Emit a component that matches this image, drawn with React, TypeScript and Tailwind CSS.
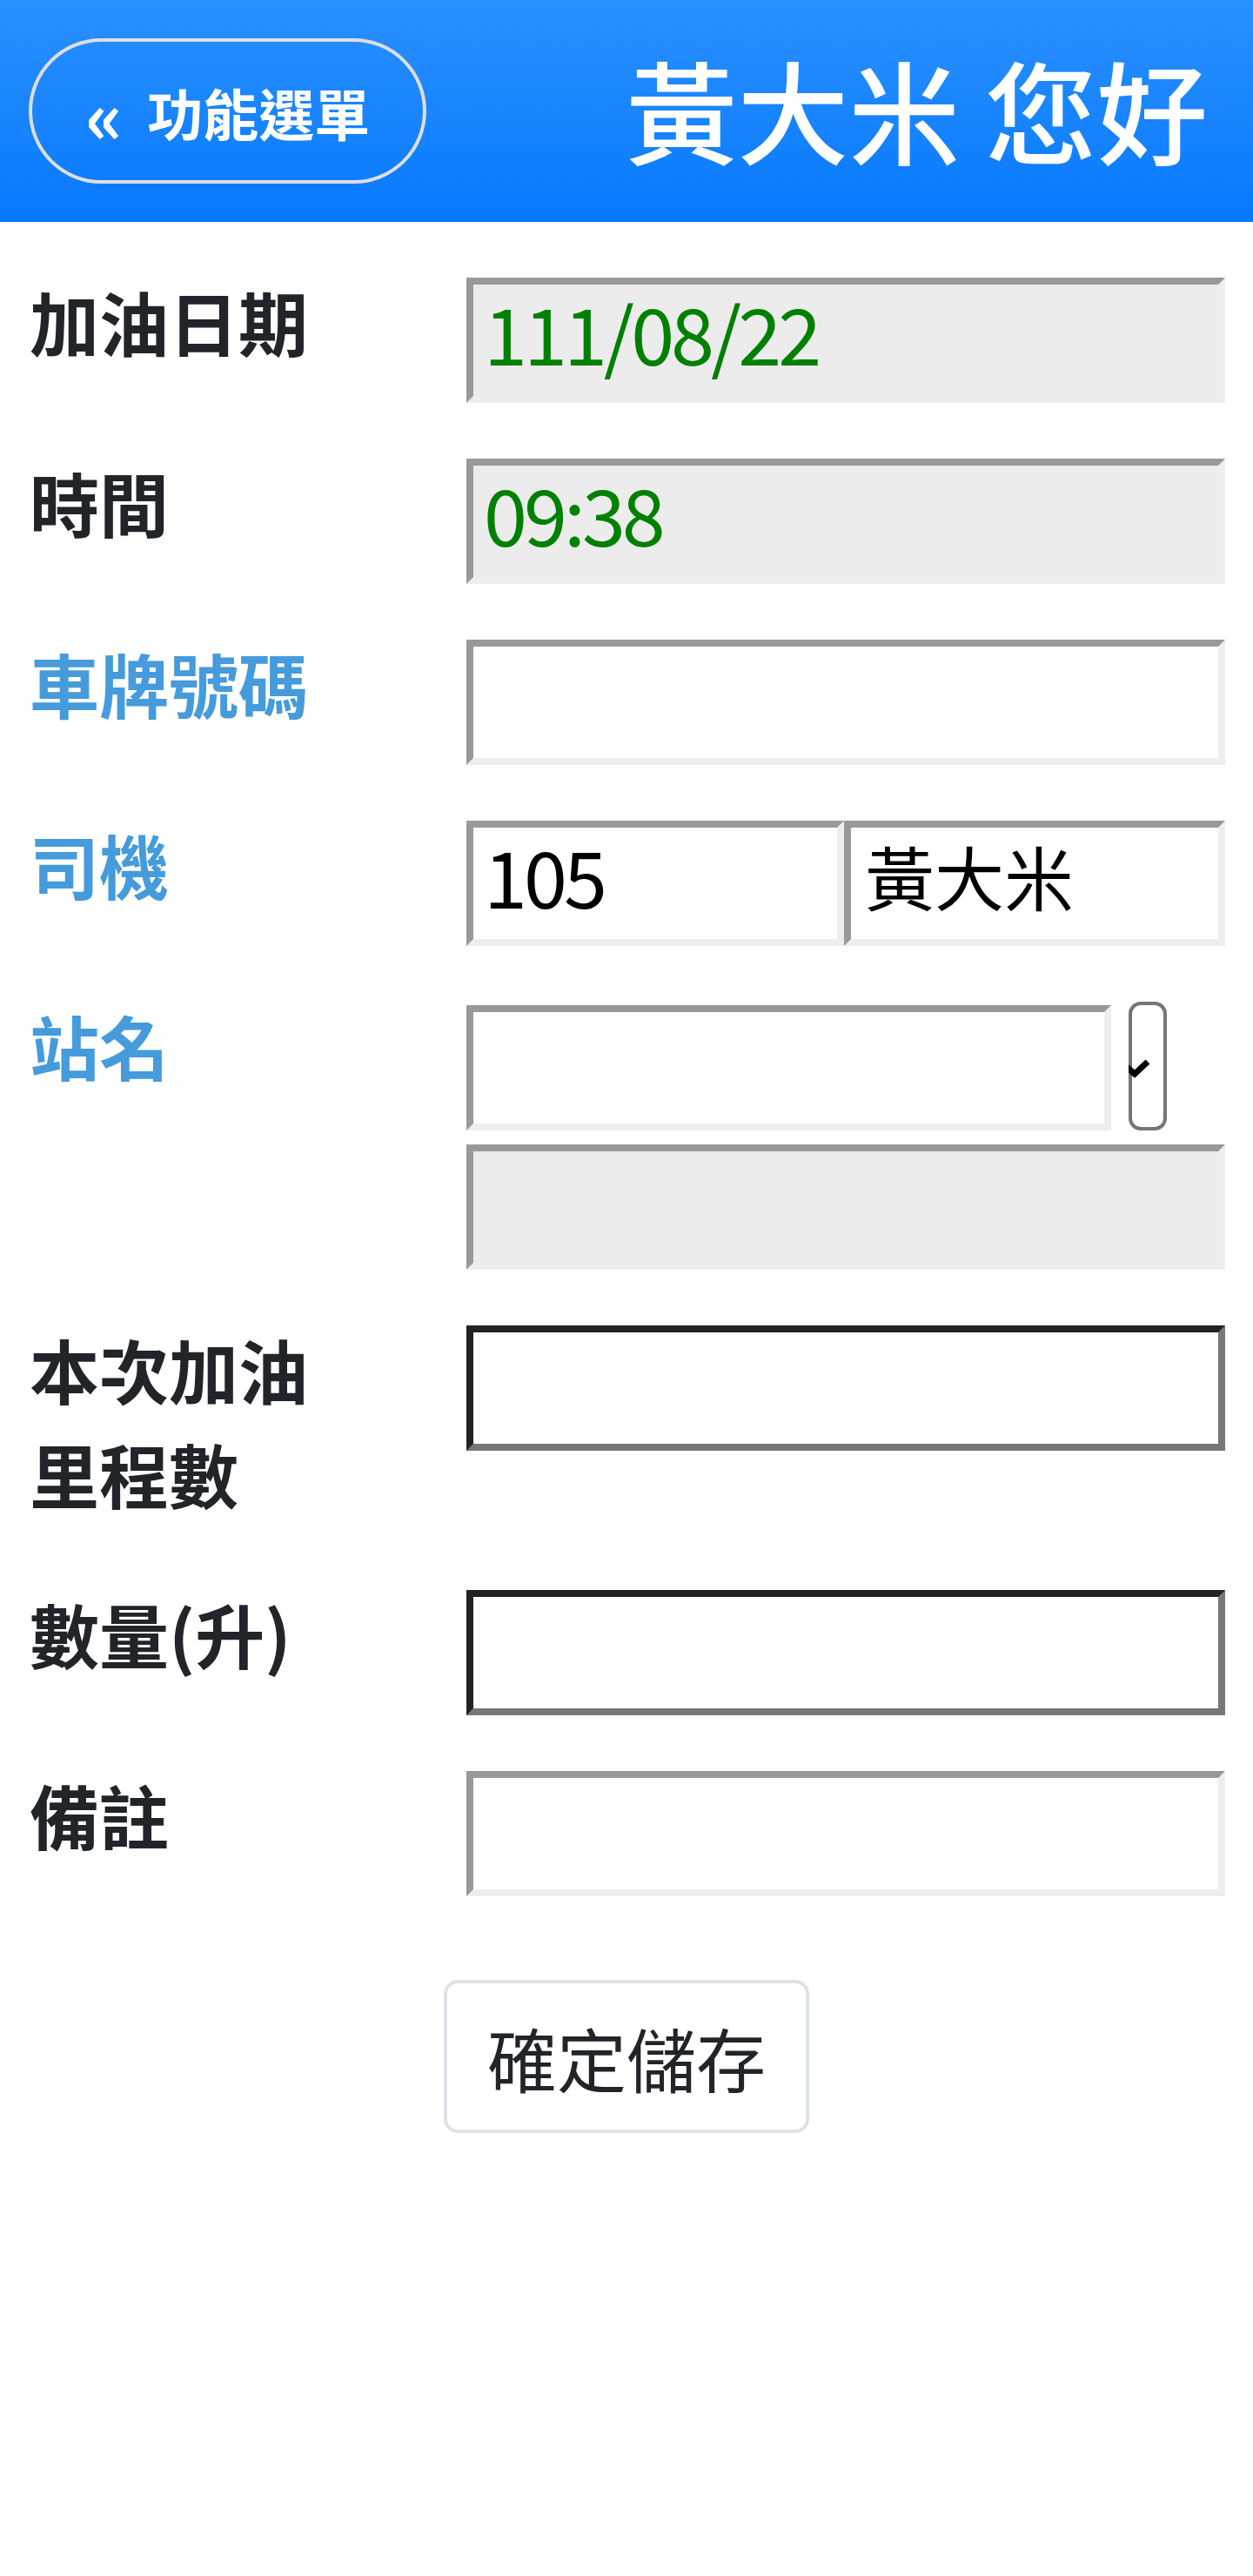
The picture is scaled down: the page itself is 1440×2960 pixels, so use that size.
import type { ReactNode } from "react";

const insetGray =
  "h-[144px] border-8 border-t-[#999] border-l-[#999] border-r-[#eee] border-b-[#eee] px-[12px] pb-[20px] outline-none";
const insetDark =
  "h-[144px] border-8 border-t-[#222] border-l-[#222] border-r-[#777] border-b-[#777] px-[12px] pb-[20px] outline-none";
const digits = "text-[90px] tracking-[-4px]";

function Row({
  label,
  blue,
  children,
}: {
  label: ReactNode;
  blue?: boolean;
  children: ReactNode;
}) {
  return (
    <div className="mb-16 flex items-start">
      <div
        className={`relative top-[-11px] w-[536px] shrink-0 pl-[34px] text-[80px] leading-[120px] font-bold ${
          blue ? "text-[#459bdb]" : "text-[#212529]"
        }`}
      >
        {label}
      </div>
      <div className="min-w-0 flex-1 pr-[32px]">{children}</div>
    </div>
  );
}

export default function App() {
  return (
    <div className="min-h-[2960px] bg-white font-['Noto_Sans_CJK_TC','Noto_Sans_CJK_SC',sans-serif]">
      <header className="flex h-[255px] items-center justify-between bg-linear-to-b from-[#2990ff] to-[#0479fe] pl-[33px] pr-[52px]">
        <button className="flex h-[167px] w-[457px] items-center justify-center rounded-full border-4 border-[#dedede] text-[64px] leading-none font-bold text-white">
          <span className="relative top-[2px] text-[82px]">«</span>
          <span className="ml-[28px]">功能選單</span>
        </button>
        <h1 className="relative top-[-3px] text-[128px] leading-none font-medium text-white">
          黃大米 您好
        </h1>
      </header>

      <main className="pt-16">
        <Row label="加油日期">
          <input
            readOnly
            defaultValue="111/08/22"
            className={`${insetGray} ${digits} w-full bg-[#ececec] text-[#008000]`}
          />
        </Row>
        <Row label="時間">
          <input
            readOnly
            defaultValue="09:38"
            className={`${insetGray} ${digits} w-full bg-[#ececec] text-[#008000]`}
          />
        </Row>
        <Row label="車牌號碼" blue>
          <input className={`${insetGray} ${digits} w-full bg-white`} />
        </Row>
        <Row label="司機" blue>
          <div className="flex">
            <input
              defaultValue="105"
              className={`${insetGray} ${digits} w-0 flex-1 bg-white text-black`}
            />
            <input
              defaultValue="黃大米"
              className={`${insetGray} w-0 flex-1 bg-white pl-[16px] text-[80px] text-black`}
            />
          </div>
        </Row>
        <Row label="站名" blue>
          <div className="flex flex-col gap-4">
            <div className="flex items-end">
              <input className={`${insetGray} ${digits} w-[741px] shrink-0 bg-white`} />
              <div className="relative ml-[20px] h-[148px] w-[44px] shrink-0 rounded-[14px] border-4 border-[#767676]">
                <svg
                  className="absolute top-[62px] left-[-4px]"
                  width="26"
                  height="22"
                  viewBox="0 0 26 22"
                >
                  <path d="M-8 4 L7 17 L22 3" fill="none" stroke="#000" strokeWidth="7" />
                </svg>
              </div>
            </div>
            <input readOnly className={`${insetGray} ${digits} w-full bg-[#ececec]`} />
          </div>
        </Row>
        <Row
          label={
            <>
              本次加油
              <br />
              里程數
            </>
          }
        >
          <input className={`${insetDark} ${digits} w-full bg-white`} />
        </Row>
        <Row label="數量(升)">
          <input className={`${insetDark} ${digits} w-full bg-white`} />
        </Row>
        <Row label="備註">
          <input className={`${insetGray} ${digits} w-full bg-white`} />
        </Row>

        <div className="flex justify-center pt-[32px]">
          <button className="h-[176px] w-[420px] rounded-[16px] border-4 border-[#dee2e6] bg-white text-[80px] leading-[120px] text-[#212529]">
            確定儲存
          </button>
        </div>
      </main>
    </div>
  );
}
